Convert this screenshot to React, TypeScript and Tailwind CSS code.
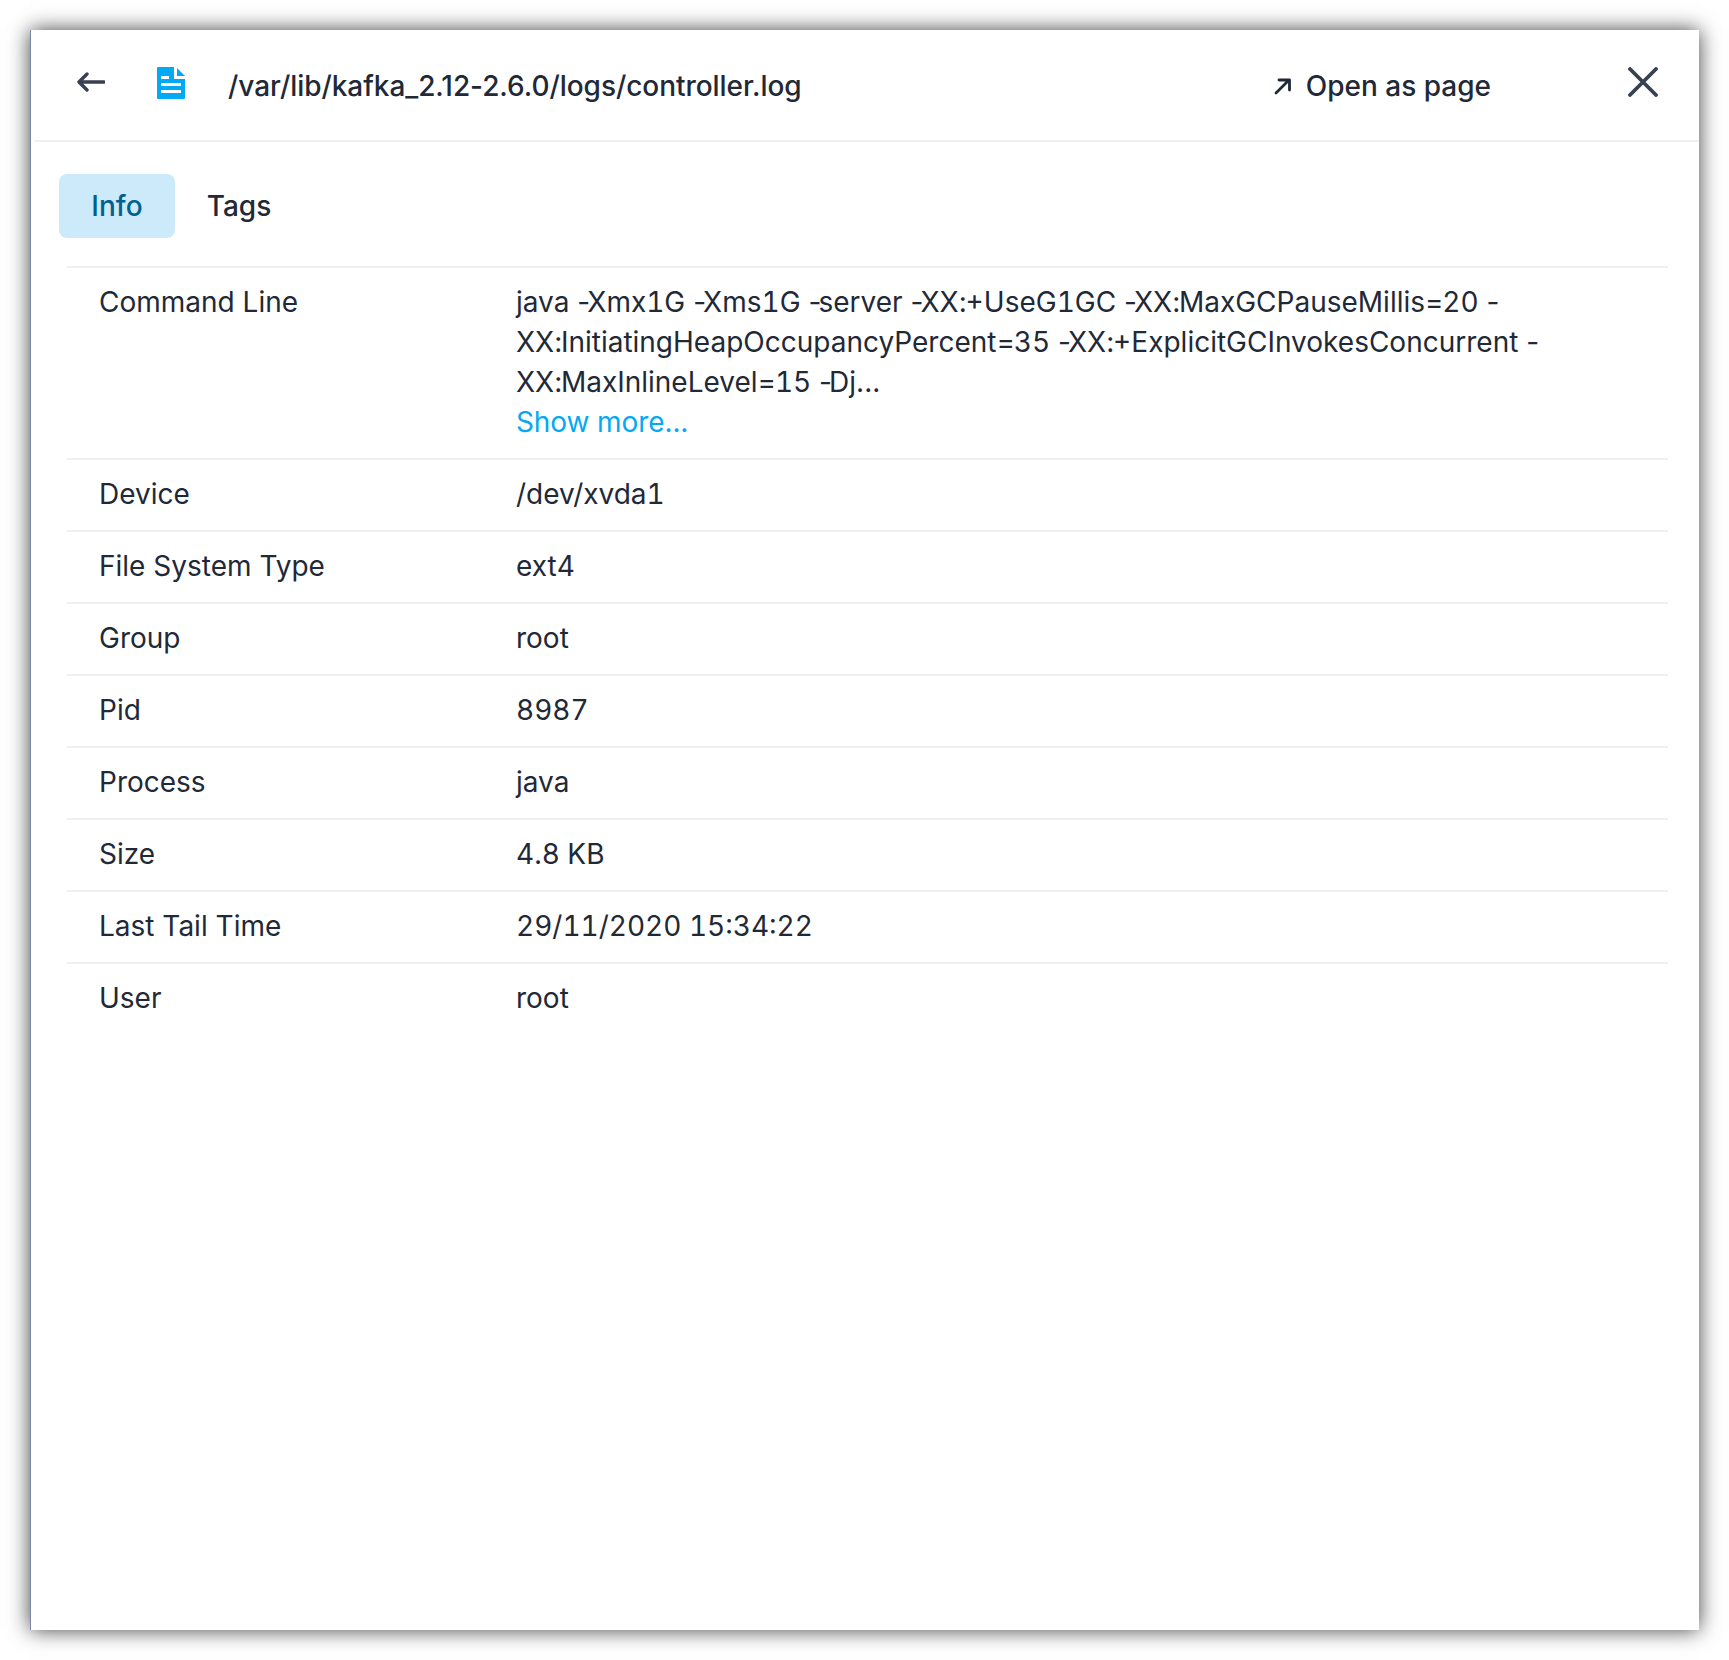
const rows = [
  { label: "Device", value: "/dev/xvda1" },
  { label: "File System Type", value: "ext4" },
  { label: "Group", value: "root" },
  { label: "Pid", value: "8987" },
  { label: "Process", value: "java" },
  { label: "Size", value: "4.8 KB" },
  { label: "Last Tail Time", value: "29/11/2020 15:34:22" },
  { label: "User", value: "root" },
];

const command =
  "java -Xmx1G -Xms1G -server -XX:+UseG1GC -XX:MaxGCPauseMillis=20 -XX:InitiatingHeapOccupancyPercent=35 -XX:+ExplicitGCInvokesConcurrent -XX:MaxInlineLevel=15 -Dj...";

// digits are tabular, the punctuation around them sits tighter
function partClass(part: string) {
  if (/^\d+$/.test(part)) return "tabular-nums";
  if (part === "-") return "tracking-[-2.9px]";
  if (part === ":") return "tracking-[-1.4px]";
  if (part === "=") return "tracking-[-1.2px]";
  return "";
}

function FileIcon() {
  return (
    <svg width="28" height="32" viewBox="0 0 28 32" className="block">
      <path d="M0 1Q0 0 1 0H17V12H28V31Q28 32 27 32H1Q0 32 0 31Z M20 1L28 9H20Z" fill="#03a9f4" />
      <rect x="4" y="9" width="8" height="3" fill="#fff" />
      <rect x="4" y="16" width="20" height="3" fill="#fff" />
      <rect x="4" y="23" width="20" height="3" fill="#fff" />
    </svg>
  );
}

export default function App() {
  return (
    <div className="w-[1729px] h-[1660px] bg-white overflow-hidden p-[30px] font-['Inter',sans-serif] text-[#1f2937] text-[28px]">
      <div className="h-[1600px] bg-white border-l border-l-[#7a88a8] shadow-[0_0_20px_rgba(0,0,0,0.75)]">
        <header className="h-[112px] ml-1 border-b-2 border-[#f0f0f0] flex items-center">
          <svg width="28" height="20" viewBox="0 0 28 20" fill="none" stroke="#374151" strokeWidth="3.4" strokeLinecap="round" strokeLinejoin="round" className="ml-[42px] -mt-[6px]">
            <path d="M2 10H27M10 2L2 10L10 18" />
          </svg>
          <div className="ml-[52px] -mt-[4px]"><FileIcon /></div>
          <span className="ml-[43px] font-medium tracking-[-0.05px] mt-[2px]">/var/lib/kafka_2.12-2.6.0/logs/controller.log</span>
          <span className="ml-auto flex items-center gap-[14px] font-medium mt-[2px]">
            <svg width="18" height="17" viewBox="0 0 18 17" fill="none" stroke="#1f2937" strokeWidth="2.8" strokeLinecap="round" strokeLinejoin="round">
              <path d="M2 15L15 2M5 2H15.5V12" />
            </svg>
            Open as page
          </span>
          <svg width="30" height="30" viewBox="0 0 30 30" fill="none" stroke="#374151" strokeWidth="3.8" strokeLinecap="round" className="ml-[137px] mr-[41px] -mt-[6px]">
            <path d="M2 2L28 28M28 2L2 28" />
          </svg>
        </header>
        <div className="pl-[28px] pt-8 flex gap-[6px]">
          <div className="w-[116px] h-16 rounded-lg bg-[#cdeafb] text-[#01628f] font-[450] flex items-center justify-center">Info</div>
          <div className="w-[116px] h-16 font-[450] flex items-center justify-center">Tags</div>
        </div>
        <div className="ml-[36px] w-[1601px] mt-7">
          <div className="flex border-t-2 border-[#f0f0f0] pt-[14px] pb-4 leading-10">
            <div className="w-[449px] pl-8">Command Line</div>
            <div className="flex-1 pr-[120px]">
              {command.split(/(\d+|[-:=])/).map((part, i) => (
                <span key={i} className={partClass(part)}>{part}</span>
              ))}
              <div className="text-[#03a9f4] tracking-[-0.1px]">Show more...</div>
            </div>
          </div>
          {rows.map((row) => (
            <div key={row.label} className="flex border-t-2 border-[#f0f0f0] pt-[14px] pb-4 leading-10">
              <div className="w-[449px] pl-8">{row.label}</div>
              <div className="flex-1 tabular-nums">{row.value}</div>
            </div>
          ))}
        </div>
      </div>
    </div>
  );
}
